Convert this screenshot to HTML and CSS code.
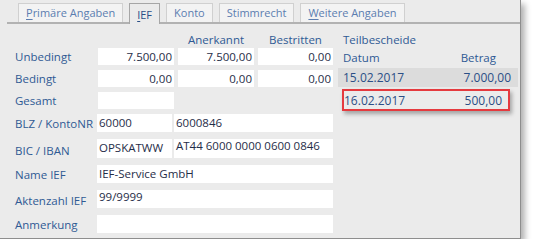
FILE: index.html
```
<!DOCTYPE html>
<html lang="de">
<head>
    <meta charset="UTF-8">
    <title>IEF</title>
    <link rel="stylesheet" href="styles.css">
</head>
<body>
    <div class="window">
        <div class="tabs">
            <div class="tab"><u>P</u>rimäre Angaben</div>
            <div class="tab active"><u>I</u>EF</div>
            <div class="tab">Konto</div>
            <div class="tab">Stimmrecht</div>
            <div class="tab"><u>W</u>eitere Angaben</div>
        </div>

        <div class="content">
            <div class="form">
                <div class="head-row">
                    <div class="col-head">Anerkannt</div>
                    <div class="col-head last">Bestritten</div>
                </div>

                <div class="group amounts">
                    <div class="row">
                        <div class="label">Unbedingt</div>
                        <div class="field num">7.500,00</div>
                        <div class="field num">7.500,00</div>
                        <div class="field num last">0,00</div>
                    </div>
                    <div class="row">
                        <div class="label">Bedingt</div>
                        <div class="field num">0,00</div>
                        <div class="field num">0,00</div>
                        <div class="field num last">0,00</div>
                    </div>
                    <div class="row">
                        <div class="label">Gesamt</div>
                        <div class="field num"></div>
                    </div>
                </div>

                <div class="group details">
                    <div class="row">
                        <div class="label">BLZ / KontoNR</div>
                        <div class="field short">60000</div>
                        <div class="field long">6000846</div>
                    </div>
                    <div class="row tall">
                        <div class="label low">BIC / IBAN</div>
                        <div class="field short">OPSKATWW</div>
                        <div class="field long top">AT44 6000 0000 0600 0846</div>
                    </div>
                    <div class="row">
                        <div class="label">Name IEF</div>
                        <div class="field wide">IEF-Service GmbH</div>
                    </div>
                    <div class="row">
                        <div class="label low">Aktenzahl IEF</div>
                        <div class="field wide top">99/9999</div>
                    </div>
                    <div class="row">
                        <div class="label">Anmerkung</div>
                        <div class="field wide"></div>
                    </div>
                </div>
            </div>

            <div class="side">
                <div class="side-title">Teilbescheide</div>
                <div class="side-head">
                    <span>Datum</span>
                    <span>Betrag</span>
                </div>
                <div class="side-row shaded">
                    <span>15.02.2017</span>
                    <span>7.000,00</span>
                </div>
                <div class="side-row">
                    <div class="marked">
                        <span>16.02.2017</span>
                        <span>500,00</span>
                    </div>
                </div>
            </div>
        </div>
    </div>
</body>
</html>
```

FILE: styles.css
```
body {
    margin: 0;
    padding: 0;
    background: #fff;
    font-family: 'Open Sans', 'DejaVu Sans', sans-serif;
    font-size: 11.5px;
    color: #1f2d48;
}

.window {
    width: 521px;
    height: 239px;
    background: #ebebeb;
    border-right: 1px solid #8e8e8e;
    border-bottom: 1px solid #8e8e8e;
    box-shadow: 4px 4px 6px rgba(0, 0, 0, 0.3);
    box-sizing: border-box;
}

/* tab strip */
.tabs {
    height: 19px;
    margin-left: 7px;
    padding-left: 11px;
    padding-top: 3px;
    display: flex;
    align-items: flex-end;
    gap: 6px;
    border-bottom: 2px solid #b2b2b2;
    font-size: 11px;
}

.tab {
    height: 18px;
    line-height: 17px;
    padding: 0 7px;
    background: #f3f3f3;
    border: 1px solid #d0d0d0;
    border-bottom: none;
    color: #5b7db0;
    white-space: nowrap;
}

.tab.active {
    height: 20px;
    margin-bottom: -2px;
    background: #ebebeb;
    border-color: #a6a6a6;
    color: #2b4f86;
    line-height: 21px;
}

.tab u {
    text-underline-offset: 2px;
}

/* content */
.content {
    display: flex;
    padding-top: 8px;
}

.form {
    width: 323px;
    padding-left: 15px;
}

.head-row {
    height: 16px;
    display: flex;
    padding-left: 163px;
    gap: 4px;
    color: #2f5a94;
}

.col-head {
    width: 76px;
    text-align: center;
}

.col-head.last {
    width: 75px;
}

.group {
    display: flex;
    flex-direction: column;
}

.amounts {
    gap: 5px;
}

.details {
    gap: 7px;
    margin-top: 5px;
}

.row {
    display: flex;
    align-items: center;
    height: 17px;
    gap: 4px;
}

.details .row {
    height: 18px;
    gap: 2px;
}

.details .row.tall {
    height: 19px;
}

.label {
    width: 79px;
    color: #2f5a94;
    white-space: nowrap;
}

.details .label {
    width: 80px;
}

.label.low {
    align-self: flex-end;
    line-height: 14px;
}

.field {
    width: 76px;
    height: 100%;
    background: #fff;
    box-sizing: border-box;
    padding: 0 2px;
    line-height: 17px;
    white-space: nowrap;
    overflow: hidden;
}

.field.num {
    text-align: right;
    padding-right: 2px;
}

.field.last {
    width: 75px;
}

.field.short {
    width: 75px;
}

.field.long {
    width: 159px;
}

.field.wide {
    width: 236px;
}

.field.top {
    line-height: 13px;
}

/* Teilbescheide */
.side {
    width: 180px;
}

.side-title {
    height: 16px;
    padding-left: 5px;
    color: #2f5a94;
}

.side-head {
    height: 17px;
    display: flex;
    justify-content: space-between;
    align-items: flex-end;
    padding: 0 22px 0 5px;
    color: #2f5a94;
    line-height: 14px;
}

.side-row {
    display: flex;
    justify-content: space-between;
    align-items: center;
    color: #2b4f86;
    font-size: 12px;
}

.side-row.shaded {
    height: 19px;
    margin-top: 3px;
    padding: 0 7px 0 5px;
    background: #dcdcdc;
}

.side-row + .side-row {
    margin-top: 2px;
    height: 22px;
}

.marked {
    margin-left: 4px;
    width: 168px;
    height: 22px;
    box-sizing: border-box;
    border: 2px solid #e53a3f;
    box-shadow: 2px 3px 4px rgba(0, 0, 0, 0.3);
    display: flex;
    justify-content: space-between;
    align-items: center;
    padding: 0 6px 0 0;
}
```
